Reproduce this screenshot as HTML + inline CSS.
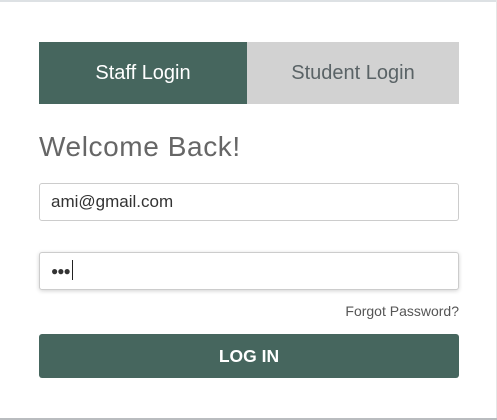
<!DOCTYPE html>
<html><head><style>
html,body{margin:0;padding:0;background:#fff;}
body{width:497px;height:420px;position:relative;overflow:hidden;font-family:"Liberation Sans",sans-serif;}
.top{position:absolute;left:0;top:0;width:497px;height:2px;background:#dde1e4;}
.right{position:absolute;right:0;top:0;width:1px;height:420px;background:#e6e6e6;}
.bot{position:absolute;left:0;top:418px;width:497px;height:2px;background:#b9bcbf;}
.tab{position:absolute;top:42px;height:62px;line-height:62px;text-align:center;font-size:20px;}
.t1{left:39px;width:208px;background:#46665e;color:#fff;}
.t2{left:247px;width:212px;background:#d2d2d2;color:#5a6366;}
h1{position:absolute;left:39px;top:131px;margin:0;font-weight:normal;font-size:28px;color:#666;letter-spacing:0.6px;}
.in{position:absolute;left:39px;width:418px;height:36px;border:1px solid #ccc;border-radius:3px;background:#fff;font-size:17px;line-height:36px;color:#333;box-sizing:content-box;}
.i1{top:183px;}
.i2{top:252px;box-shadow:0 1px 4px rgba(0,0,0,0.18);}
.fp{position:absolute;right:38px;top:303px;font-size:14px;color:#555;}
.btn{position:absolute;left:39px;top:334px;width:420px;height:44px;background:#46665e;border-radius:3px;color:#fff;font-weight:bold;font-size:17.5px;text-align:center;line-height:44px;}
</style></head><body>
<div class="top"></div><div class="right"></div><div class="bot"></div>
<div class="tab t1">Staff Login</div>
<div class="tab t2">Student Login</div>
<h1>Welcome Back!</h1>
<div class="in i1"><span style="padding-left:11px">ami@gmail.com</span></div>
<div class="in i2"><span style="padding-left:11px;font-size:12px;letter-spacing:-1px;vertical-align:top">●●●</span><span style="display:inline-block;width:1px;height:20px;background:#222;vertical-align:middle;margin-left:2px;margin-top:-3px"></span></div>
<div class="fp">Forgot Password?</div>
<div class="btn">LOG IN</div>
</body></html>
